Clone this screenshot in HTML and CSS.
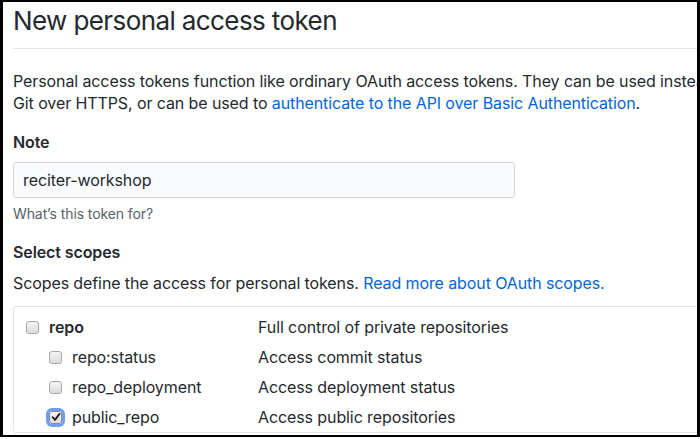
FILE: index.html
```html
<!DOCTYPE html>
<html>
<head>
<meta charset="utf-8">
<link rel="stylesheet" href="styles.css">
</head>
<body>
<div class="frame">
  <div class="content">
    <h1 class="title">New personal access token</h1>
    <p class="intro">Personal access tokens function like ordinary OAuth access tokens. They can be used instead of a password for<br>Git over HTTPS, or can be used to <a class="link" href="#">authenticate to the API over Basic Authentication</a>.</p>
    <div class="field">
      <div class="label">Note</div>
      <div class="input">reciter-workshop</div>
      <div class="hint">What’s this token for?</div>
    </div>
    <div class="label scopes-title">Select scopes</div>
    <p class="scopes-desc">Scopes define the access for personal tokens. <a class="link" href="#">Read more about OAuth scopes.</a></p>
    <div class="scopes">
      <div class="row">
        <div class="left"><span class="cb"></span><span class="name bold">repo</span></div>
        <div class="desc">Full control of private repositories</div>
      </div>
      <div class="row">
        <div class="left sub"><span class="cb"></span><span class="name">repo:status</span></div>
        <div class="desc">Access commit status</div>
      </div>
      <div class="row">
        <div class="left sub"><span class="cb"></span><span class="name">repo_deployment</span></div>
        <div class="desc">Access deployment status</div>
      </div>
      <div class="row">
        <div class="left sub"><span class="cb checked"><svg width="10" height="10" viewBox="0 0 10 10"><path d="M1.6 5.2 L4 7.8 L8.5 1.9" fill="none" stroke="#222" stroke-width="1.9" stroke-linecap="round" stroke-linejoin="round"/></svg></span><span class="name">public_repo</span></div>
        <div class="desc">Access public repositories</div>
      </div>
    </div>
  </div>
</div>
</body>
</html>
```

FILE: styles.css
```css
html, body {
  margin: 0;
  padding: 0;
  background: #fff;
}
.frame {
  width: 700px;
  height: 437px;
  box-sizing: border-box;
  border: solid #000;
  border-width: 2px 3px 2px 3px;
  overflow: hidden;
  font-family: "Inter", "Liberation Sans", sans-serif;
  color: #24292e;
  letter-spacing: -0.1px;
}
.content {
  width: 900px;
  padding-left: 10px;
}
.title {
  margin: 2px 0 0 0;
  font-size: 26px;
  font-weight: 400;
  letter-spacing: -0.6px;
  line-height: 34px;
  padding-bottom: 10px;
  border-bottom: 1px solid #e1e4e8;
}
.intro {
  margin: 21px 0 0 0;
  font-size: 16px;
  line-height: 22px;
}
.link {
  color: #0366d6;
  text-decoration: none;
}
.field {
  margin-top: 17px;
}
.label {
  font-size: 16px;
  font-weight: 600;
  line-height: 22px;
}
.input {
  margin-top: 9px;
  width: 502px;
  height: 36px;
  box-sizing: border-box;
  border: 1px solid #d1d5da;
  border-radius: 3px;
  background: #fafbfc;
  font-size: 16px;
  line-height: 34px;
  padding-left: 9px;
}
.hint {
  margin-top: 6px;
  font-size: 14px;
  line-height: 20px;
  color: #586069;
}
.scopes-title {
  margin-top: 17px;
}
.scopes-desc {
  margin: 9px 0 0 0;
  font-size: 16px;
  line-height: 22px;
}
.scopes {
  margin-top: 12px;
  border: 1px solid #e1e4e8;
  border-radius: 3px;
  padding-top: 5px;
}
.row {
  display: flex;
  align-items: center;
  height: 30px;
  font-size: 16px;
}
.left {
  width: 244px;
  display: flex;
  align-items: center;
  padding-left: 12px;
  box-sizing: border-box;
}
.left.sub {
  padding-left: 35px;
}
.cb {
  width: 13px;
  height: 13px;
  box-sizing: border-box;
  border: 1px solid #a9a9a9;
  border-radius: 3px;
  background: linear-gradient(#f4f4f4, #dcdcdc);
  margin-right: 10px;
  flex: none;
  display: flex;
  align-items: center;
  justify-content: center;
}
.cb.checked {
  box-shadow: 0 0 0 3px #6f9ff2;
  border-color: #8a8a8a;
}
.bold {
  font-weight: 600;
}
.desc {
  color: #24292e;
}
```
